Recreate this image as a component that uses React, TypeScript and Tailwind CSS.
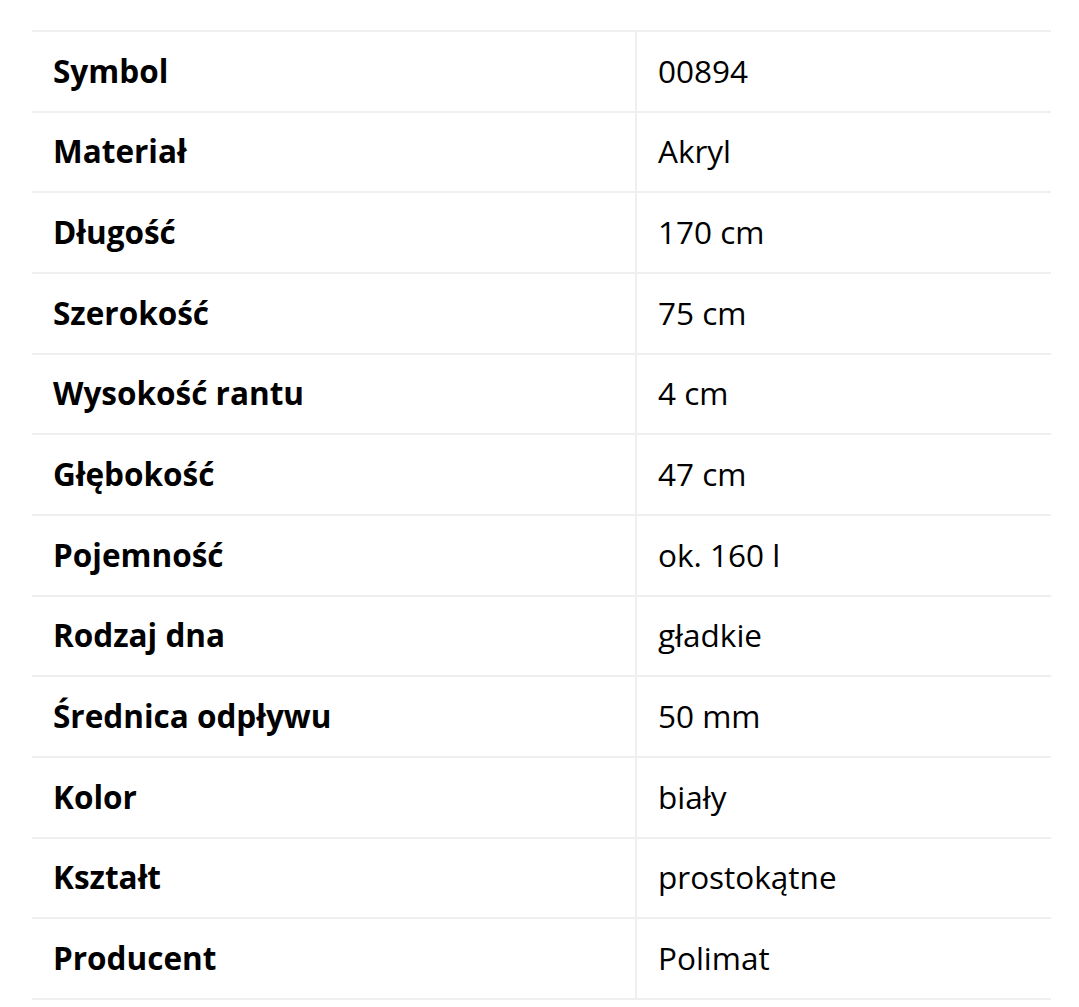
const specs = [
  { label: 'Symbol', value: '00894' },
  { label: 'Materiał', value: 'Akryl' },
  { label: 'Długość', value: '170 cm' },
  { label: 'Szerokość', value: '75 cm' },
  { label: 'Wysokość rantu', value: '4 cm' },
  { label: 'Głębokość', value: '47 cm' },
  { label: 'Pojemność', value: 'ok. 160 l' },
  { label: 'Rodzaj dna', value: 'gładkie' },
  { label: 'Średnica odpływu', value: '50 mm' },
  { label: 'Kolor', value: 'biały' },
  { label: 'Kształt', value: 'prostokątne' },
  { label: 'Producent', value: 'Polimat' },
]

export default function App() {
  return (
    <div className="min-h-screen bg-white pt-[30px] pl-[32px] font-['Open_Sans',sans-serif] text-[31.5px] text-black">
      <div className="w-[1019px] border-t-2 border-[#efefef]">
        {specs.map(s => (
          <div key={s.label} className="flex h-[80.67px] border-b-2 border-[#efefef]">
            <div className="w-[603px] flex items-center pl-[21px] pb-[2px] font-bold">{s.label}</div>
            <div className="flex-1 flex items-center pl-[21px] pb-[2px] border-l-2 border-[#efefef]">{s.value}</div>
          </div>
        ))}
      </div>
    </div>
  )
}
